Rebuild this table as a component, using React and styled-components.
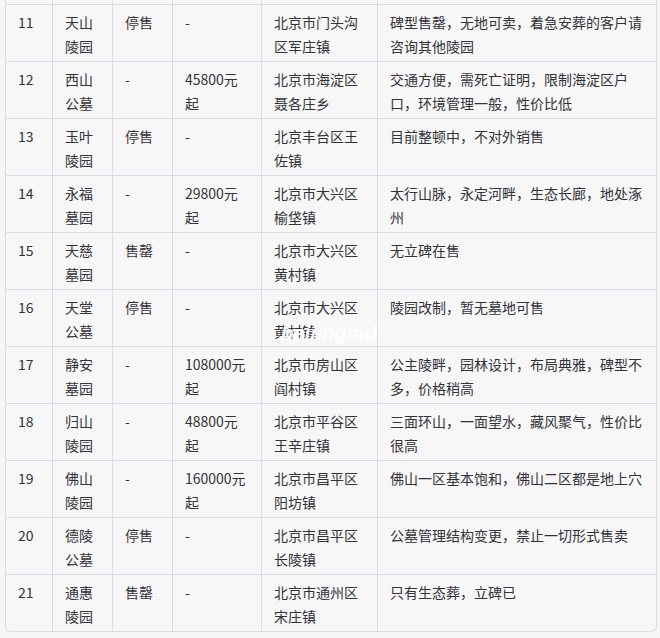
import React from "react";
import styled, { createGlobalStyle } from "styled-components";

const Global = createGlobalStyle`
  html, body { margin: 0; padding: 0; background: #f6f6f7; }
  body { font-family: "Noto Sans CJK SC", "Noto Sans", sans-serif; }
`;

const Page = styled.div`
  position: relative;
  padding: 0 4px 0 5px;
  width: 660px;
  height: 638px;
  box-sizing: border-box;
  overflow: hidden;
`;

const Frame = styled.div`
  width: 652px;
  box-sizing: border-box;
  border: 1px solid #dcdbe6;
  border-top: none;
  border-radius: 0 0 6px 6px;
  overflow: hidden;
  background: #f7f7f8;
`;

const Table = styled.table`
  width: 650px;
  table-layout: fixed;
  border-collapse: separate;
  border-spacing: 0;
  font-size: 14px;
  line-height: 24px;
  color: #333338;
`;

const Cell = styled.td`
  box-sizing: border-box;
  vertical-align: top;
  padding: ${(p) => (p.$stub ? "0" : "5px 12px 3px 12px")};
  height: ${(p) => (p.$stub ? "4px" : "57px")};
  border-left: ${(p) => (p.$first ? "none" : "1px solid #dcdbe6")};
  border-top: ${(p) => (p.$stub ? "none" : "1px solid #dcdbe6")};
  word-break: break-all;
`;

const Watermark = styled.div`
  position: absolute;
  left: 281px;
  top: 321px;
  font-family: "Liberation Sans", Arial, sans-serif;
  font-weight: bold;
  font-style: italic;
  font-size: 20px;
  line-height: 24px;
  color: rgba(255, 255, 255, 0.92);
  letter-spacing: 0.2px;
  pointer-events: none;
`;

const widths = [46, 60, 60, 89, 116, 279];

const rows = [
  ["11", "天山陵园", "停售", "-", "北京市门头沟区军庄镇", "碑型售罄，无地可卖，着急安葬的客户请咨询其他陵园"],
  ["12", "西山公墓", "-", "45800元起", "北京市海淀区聂各庄乡", "交通方便，需死亡证明，限制海淀区户口，环境管理一般，性价比低"],
  ["13", "玉叶陵园", "停售", "-", "北京丰台区王佐镇", "目前整顿中，不对外销售"],
  ["14", "永福墓园", "-", "29800元起", "北京市大兴区榆垡镇", "太行山脉，永定河畔，生态长廊，地处涿州"],
  ["15", "天慈墓园", "售罄", "-", "北京市大兴区黄村镇", "无立碑在售"],
  ["16", "天堂公墓", "停售", "-", "北京市大兴区黄村镇", "陵园改制，暂无墓地可售"],
  ["17", "静安墓园", "-", "108000元起", "北京市房山区阎村镇", "公主陵畔，园林设计，布局典雅，碑型不多，价格稍高"],
  ["18", "归山陵园", "-", "48800元起", "北京市平谷区王辛庄镇", "三面环山，一面望水，藏风聚气，性价比很高"],
  ["19", "佛山陵园", "-", "160000元起", "北京市昌平区阳坊镇", "佛山一区基本饱和，佛山二区都是地上穴"],
  ["20", "德陵公墓", "停售", "-", "北京市昌平区长陵镇", "公墓管理结构变更，禁止一切形式售卖"],
  ["21", "通惠陵园", "售罄", "-", "北京市通州区宋庄镇", "只有生态葬，立碑已"],
];

export default function App() {
  return (
    <>
      <Global />
      <Page>
        <Frame>
          <Table>
            <colgroup>
              {widths.map((w, i) => (
                <col key={i} style={{ width: w }} />
              ))}
            </colgroup>
            <tbody>
              <tr>
                {widths.map((_, i) => (
                  <Cell key={i} $stub $first={i === 0} />
                ))}
              </tr>
              {rows.map((r) => (
                <tr key={r[0]}>
                  {r.map((c, i) => (
                    <Cell key={i} $first={i === 0}>
                      {c}
                    </Cell>
                  ))}
                </tr>
              ))}
            </tbody>
          </Table>
        </Frame>
        <Watermark>beijingmd</Watermark>
      </Page>
    </>
  );
}
